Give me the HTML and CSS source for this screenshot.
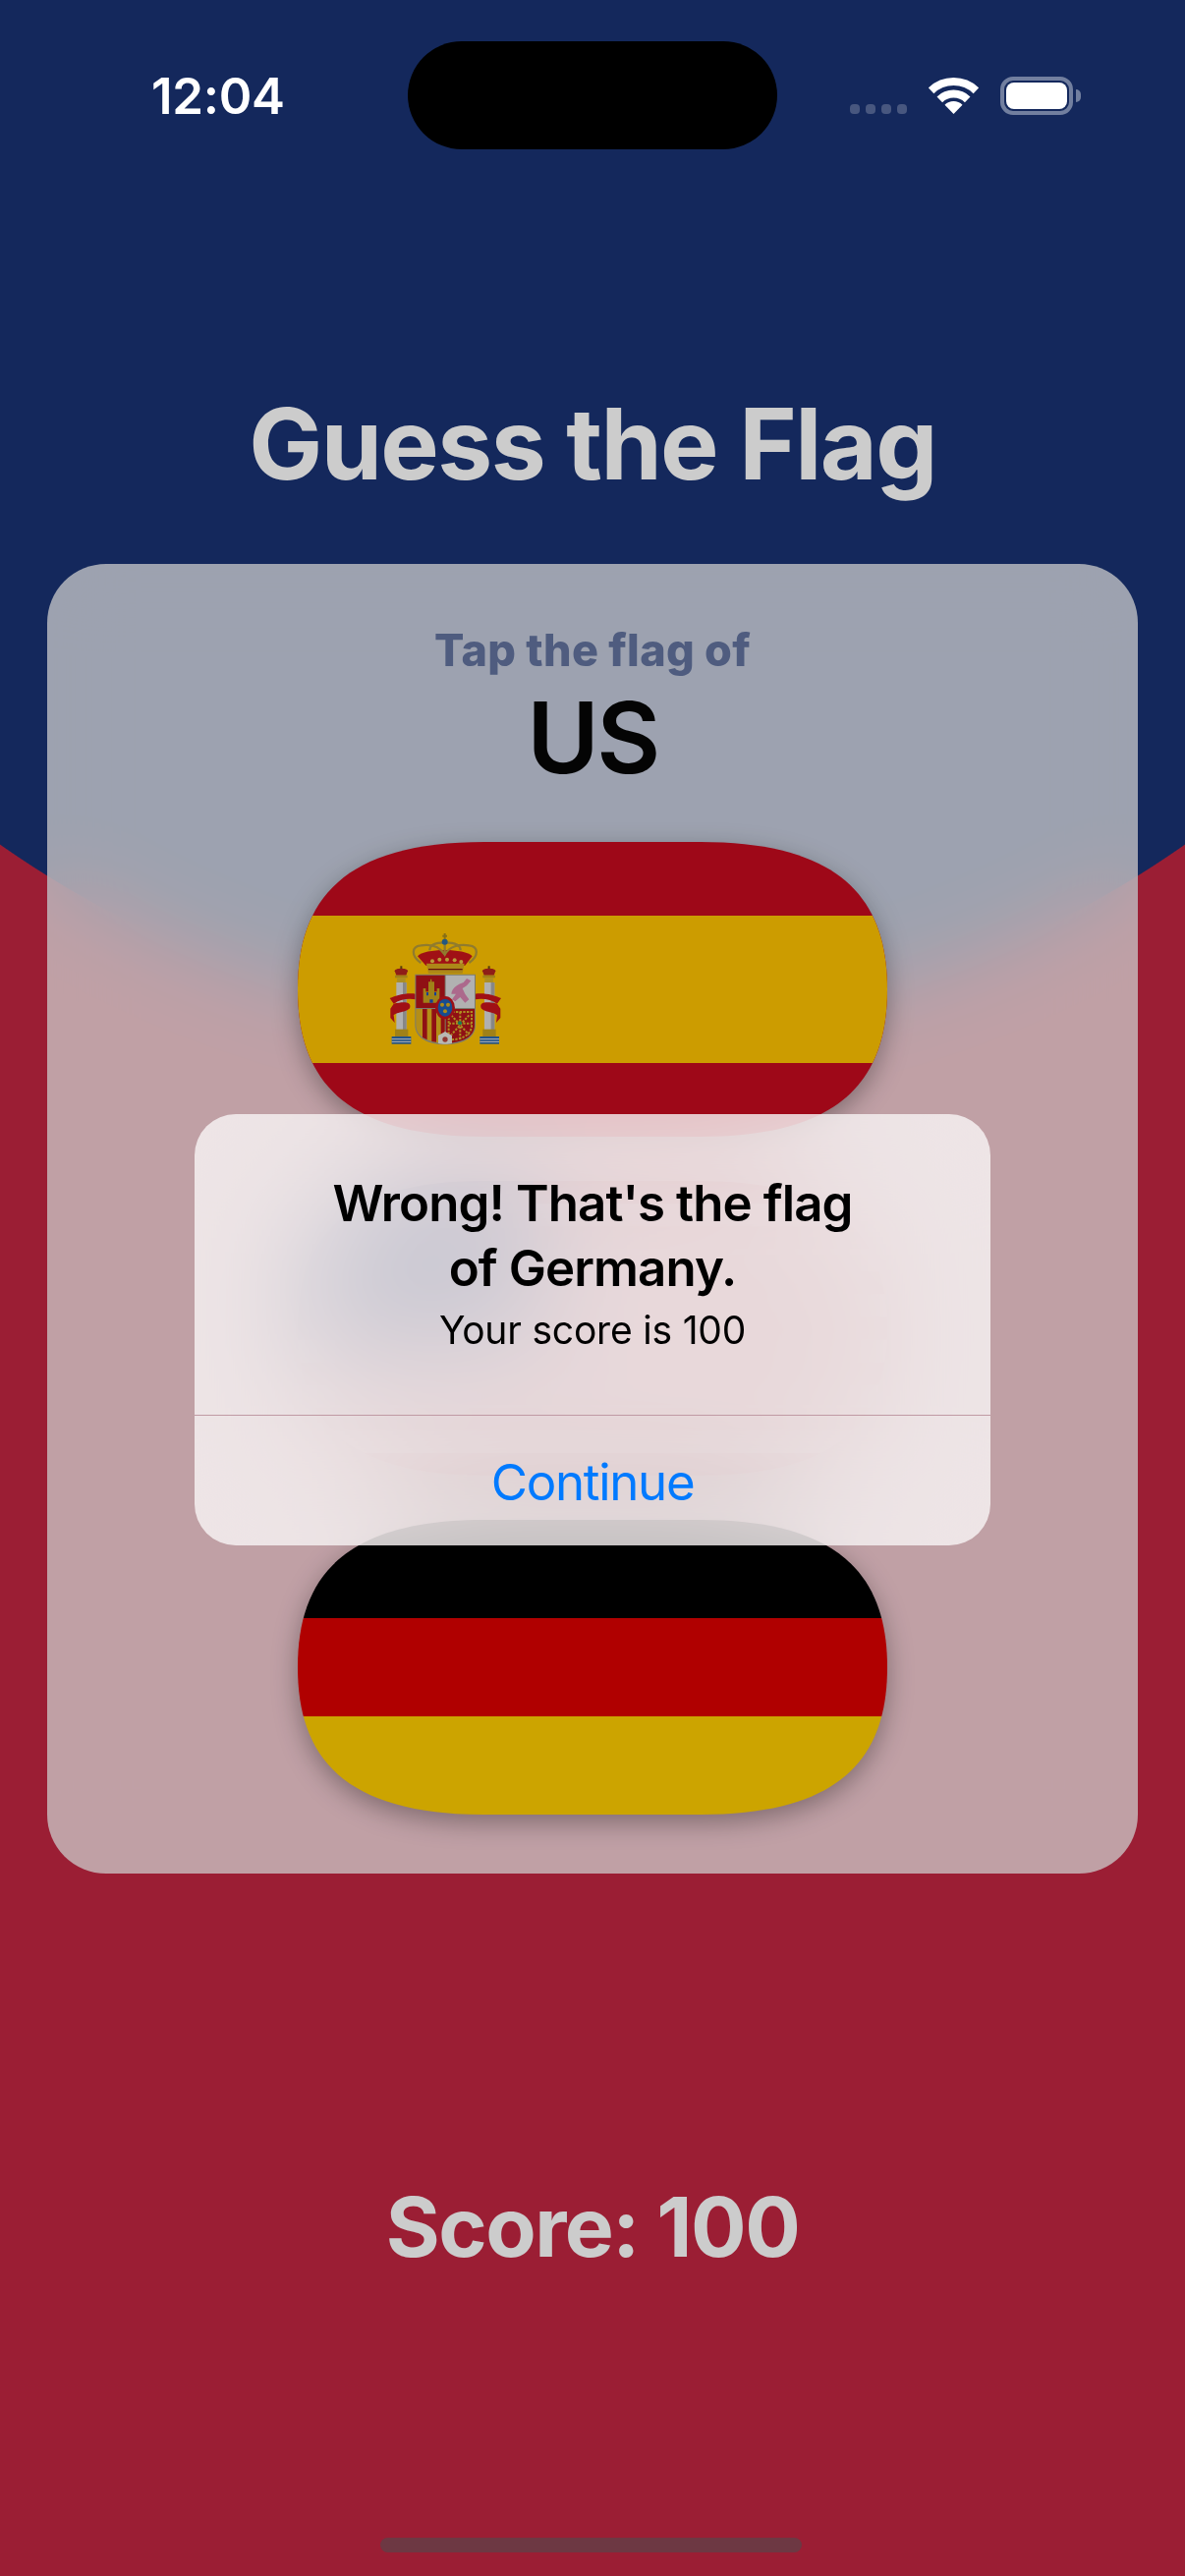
FILE: index.html
```html
<!DOCTYPE html>
<html lang="en">
<head>
<meta charset="utf-8">
<title>Guess the Flag</title>
<link rel="stylesheet" href="styles.css">
</head>
<body>
<svg class="defs" width="0" height="0" aria-hidden="true">
  <defs>
    <clipPath id="pill"><path d="M190 0H410C554 0 600 59 600 150C600 241 554 300 410 300H190C46 300 0 241 0 150C0 59 46 0 190 0Z"/></clipPath>
  </defs>
</svg>
<main class="screen">
  <div class="spacer-status"></div>
  <h1 class="title">Guess the Flag</h1>
  <section class="card">
    <p class="prompt">Tap the flag of</p>
    <p class="country">US</p>
    <div class="flags">
      <svg class="flag" viewBox="0 0 600 300" width="600" height="300">
        <g clip-path="url(#pill)">
          <rect width="600" height="300" fill="#c60b1e"/>
          <rect y="75" width="600" height="150" fill="#ffc400"/>
          <g transform="translate(57 73) scale(.3333)">
            <!-- crown -->
            <path d="M195 130C215 105 340 105 362 130L340 158H220Z" fill="#c8151b"/>
            <path d="M205 150C175 130 175 100 205 97C235 92 262 100 278 125C292 100 322 92 352 97C382 100 382 130 352 150" fill="none" stroke="#b59a3a" stroke-width="7"/>
            <path d="M278 125V92M232 112C232 95 250 88 278 88C306 88 326 95 326 112" fill="none" stroke="#b59a3a" stroke-width="7"/>
            <circle cx="278" cy="86" r="9" fill="#2f6f9f"/>
            <path d="M278 60V78M271 68H285" stroke="#a98a1d" stroke-width="6"/>
            <path d="M222 152H338L332 182H228Z" fill="#d9a91f"/>
            <path d="M228 170H332" stroke="#7d1a12" stroke-width="4"/>
            <g fill="#e8c447"><circle cx="240" cy="145" r="6"/><circle cx="262" cy="140" r="6"/><circle cx="285" cy="140" r="6"/><circle cx="308" cy="142" r="6"/><circle cx="328" cy="147" r="6"/></g>
            <!-- pillars -->
            <g>
              <path d="M125 175C125 165 165 165 165 175L160 188H130Z" fill="#b3261d"/>
              <path d="M142 160H148V168H142Z" fill="#6d4c10"/>
              <rect x="126" y="188" width="38" height="8" fill="#c9a21e"/>
              <rect x="132" y="196" width="26" height="14" fill="#d8b32e"/>
              <rect x="130" y="210" width="31" height="145" fill="#dcdcdc"/>
              <rect x="150" y="210" width="11" height="145" fill="#a9a9a9"/>
              <rect x="126" y="353" width="40" height="22" fill="#c9a21e"/>
              <rect x="116" y="375" width="59" height="23" fill="#2a68ad"/>
              <path d="M116 383H175M116 391H175" stroke="#e5e5e5" stroke-width="3"/>
            </g>
            <g>
              <path d="M393 175C393 165 433 165 433 175L428 188H398Z" fill="#b3261d"/>
              <path d="M410 160H416V168H410Z" fill="#6d4c10"/>
              <rect x="394" y="188" width="38" height="8" fill="#c9a21e"/>
              <rect x="400" y="196" width="26" height="14" fill="#d8b32e"/>
              <rect x="399" y="210" width="31" height="145" fill="#dcdcdc"/>
              <rect x="419" y="210" width="11" height="145" fill="#a9a9a9"/>
              <rect x="394" y="353" width="40" height="22" fill="#c9a21e"/>
              <rect x="385" y="375" width="59" height="23" fill="#2a68ad"/>
              <path d="M385 383H444M385 391H444" stroke="#e5e5e5" stroke-width="3"/>
            </g>
            <!-- ribbons -->
            <path d="M110 258C130 248 165 240 190 245V262C165 258 140 262 122 275Z" fill="#c8151b"/>
            <path d="M122 275C150 268 175 268 172 285C170 300 130 300 122 310L125 333L112 318V290Z" fill="#c8151b"/>
            <path d="M370 245C395 240 430 248 450 258L438 275C420 262 395 258 370 262Z" fill="#c8151b"/>
            <path d="M438 275C410 268 385 268 388 285C390 300 430 300 438 310L435 333L448 318V290Z" fill="#c8151b"/>
            <!-- shield -->
            <path d="M187 185H372V340C372 380 330 400 279 400C228 400 187 380 187 340Z" fill="#9a9a8a"/>
            <path d="M190 188H278V288H190Z" fill="#b3141a"/>
            <path d="M281 188H369V288H281Z" fill="#dedede"/>
            <path d="M190 291H278V396C230 394 190 378 190 340Z" fill="#e2b21e"/>
            <path d="M210 291H224V385L210 378ZM238 291H252V392L238 390ZM266 291H278V396L266 395Z" fill="#b3141a"/>
            <path d="M281 291H369V340C369 378 330 394 281 396Z" fill="#b3141a"/>
            <!-- castle -->
            <path d="M212 272V228H220V238H228V208H234V200H238V208H246V238H254V228H262V272Z" fill="#c9a21e"/>
            <path d="M232 272V262H242V272ZM222 240H228V250H222ZM246 240H252V250H246Z" fill="#1d4fb8"/>
            <!-- lion -->
            <path d="M298 245C300 225 320 215 335 210L345 198L358 205L345 220L332 228L340 245L352 262L340 272L325 255L310 268L300 262L312 245Z" fill="#d884b0"/>
            <!-- Navarre chains -->
            <g fill="none" stroke="#d9b02a" stroke-width="6">
              <path d="M290 300H360V345C355 375 325 385 290 385Z" stroke-dasharray="7 4"/>
              <path d="M325 300V385M290 335H360M298 310L352 370M352 310L298 370" stroke-dasharray="7 4"/>
            </g>
            <circle cx="324" cy="334" r="6" fill="#1f9a6b"/>
            <!-- pomegranate base -->
            <path d="M258 372L279 360L300 372V396C290 399 268 399 258 396Z" fill="#e6e6e0"/>
            <circle cx="279" cy="384" r="8" fill="#b5473f"/>
            <!-- centre -->
            <ellipse cx="279" cy="287" rx="30" ry="35" fill="#c2151c"/>
            <ellipse cx="279" cy="287" rx="22" ry="27" fill="#1d5fb4"/>
            <g fill="#d9ad1f"><circle cx="270" cy="278" r="6"/><circle cx="288" cy="278" r="6"/><circle cx="279" cy="298" r="6"/></g>
          </g>
        </g>
      </svg>
      <svg class="flag" viewBox="0 0 600 300" width="600" height="300">
        <g clip-path="url(#pill)">
          <rect width="600" height="300" fill="#fff"/>
          <path d="M0 11.5H600M0 57.7H600M0 103.8H600M0 150H600M0 196.2H600M0 242.3H600M0 288.5H600" stroke="#b22234" stroke-width="23.1"/>
          <rect width="240" height="161.5" fill="#3c3b6e"/>
        </g>
      </svg>
      <svg class="flag" viewBox="0 0 600 300" width="600" height="300">
        <g clip-path="url(#pill)">
          <rect width="600" height="100" fill="#000"/>
          <rect y="100" width="600" height="100" fill="#d00"/>
          <rect y="200" width="600" height="100" fill="#ffce00"/>
        </g>
      </svg>
    </div>
  </section>
  <p class="score">Score: 100</p>
  <div class="home-indicator"></div>

  <div class="dim"></div>

  <header class="status">
    <span class="time">12:04</span>
    <span class="island"></span>
    <span class="status-icons">
      <span class="dots"><i></i><i></i><i></i><i></i></span>
      <svg class="wifi" viewBox="0 0 51 37" width="51" height="37">
        <path d="M2.6 13.3A33 33 0 0 1 48.4 13.3M11.3 22.3A20.5 20.5 0 0 1 39.7 22.3" fill="none" stroke="#fff" stroke-width="8"/>
        <path d="M25.5 37L16.5 27.65A13 13 0 0 1 34.5 27.65Z" fill="#fff"/>
      </svg>
      <span class="battery"><span class="battery-fill"></span></span>
    </span>
  </header>

  <aside class="alert">
    <div class="alert-body">
      <h2 class="alert-title">Wrong! That's the flag<br>of Germany.</h2>
      <p class="alert-message">Your score is 100</p>
    </div>
    <div class="alert-action">Continue</div>
  </aside>
</main>
</body>
</html>
```
FILE: styles.css
```css
* { box-sizing: border-box; }
html, body { margin: 0; padding: 0; }
body { width: 1206px; height: 2622px; overflow: hidden; font-family: Inter, "Liberation Sans", sans-serif; }
.defs { position: absolute; }
.screen {
  position: relative;
  width: 1206px;
  height: 2622px;
  display: flex;
  flex-direction: column;
  align-items: center;
  overflow: hidden;
  background: radial-gradient(circle 1050px at 603px 0, #193373 0, #193373 1049.5px, #c22642 1050.5px, #c22642 100%);
}
.spacer-status { height: 396px; flex: none; }
.title {
  margin: 0;
  height: 112px;
  line-height: 112px;
  font-size: 100px;
  font-weight: 700;
  letter-spacing: -1.6px;
  color: #fff;
  flex: none;
}
.card {
  margin-top: 66px;
  width: 1110px;
  height: 1333px;
  flex: none;
  padding: 60px 0 60px;
  display: flex;
  flex-direction: column;
  align-items: center;
  border-radius: 60px;
  background: rgba(255, 255, 255, .75);
  backdrop-filter: blur(40px);
}
.prompt {
  margin: 0;
  height: 56px;
  line-height: 56px;
  font-size: 45px;
  font-weight: 800;
  letter-spacing: .3px;
  color: #63749f;
}
.country {
  margin: 0;
  height: 122px;
  line-height: 122px;
  font-size: 100px;
  font-weight: 600;
  letter-spacing: -2.5px;
  color: #050505;
}
.flags {
  margin-top: 45px;
  display: flex;
  flex-direction: column;
  gap: 45px;
}
.flag { display: block; filter: drop-shadow(0 8px 13px rgba(0, 0, 0, .33)); }
.score {
  margin: 304px 0 0;
  height: 112px;
  line-height: 112px;
  font-size: 84px;
  font-weight: 700;
  letter-spacing: -1.5px;
  color: #fff;
  flex: none;
}
.home-indicator {
  position: absolute;
  left: 387px;
  top: 2583px;
  width: 429px;
  height: 15px;
  border-radius: 8px;
  background: #894654;
}
.dim { position: absolute; inset: 0; background: rgba(0, 0, 0, .2); }
.status {
  position: absolute;
  top: 42px;
  left: 0;
  width: 1206px;
  height: 110px;
  padding: 0 106px 0 154px;
  display: flex;
  align-items: center;
}
.time {
  width: 261px;
  padding-top: 2px;
  font-size: 51px;
  font-weight: 600;
  letter-spacing: -.3px;
  line-height: 110px;
  color: #fff;
}
.island { width: 376px; height: 110px; border-radius: 55px; background: #000; flex: none; }
.status-icons {
  margin-left: 74px;
  flex: 1;
  height: 110px;
  position: relative;
  display: flex;
  align-items: flex-start;
}
.dots { display: flex; gap: 6px; margin-top: 64px; }
.dots i { display: block; width: 10px; height: 10px; border-radius: 4px; background: #48577f; }
.wifi { margin: 37px 0 0 22px; flex: none; }
.battery {
  margin: 36px 0 0 22px;
  width: 74px;
  height: 39px;
  border: 4px solid #727f9f;
  border-radius: 13px;
  padding: 2px;
  position: relative;
  flex: none;
}
.battery::after {
  content: "";
  position: absolute;
  left: 73px;
  top: 9px;
  width: 5px;
  height: 13px;
  border-radius: 0 5px 5px 0;
  background: #727f9f;
}
.battery-fill { display: block; width: 100%; height: 100%; background: #fff; border-radius: 8px; }
.alert {
  position: absolute;
  left: 198px;
  top: 1134px;
  width: 810px;
  height: 439px;
  border-radius: 42px;
  background: rgba(255, 255, 255, .72);
  backdrop-filter: blur(60px);
  display: flex;
  flex-direction: column;
  text-align: center;
  overflow: hidden;
}
.alert-body { height: 307px; border-bottom: 1px solid #c09aa4; padding-top: 58px; }
.alert-title {
  margin: 0;
  font-size: 51px;
  line-height: 66px;
  font-weight: 600;
  letter-spacing: -.9px;
  color: #000;
}
.alert-message {
  margin: 0;
  padding-top: 3px;
  font-size: 39px;
  line-height: 54px;
  font-weight: 400;
  letter-spacing: -.2px;
  color: #000;
}
.alert-action {
  flex: 1;
  padding-top: 2px;
  display: flex;
  align-items: center;
  justify-content: center;
  font-size: 51px;
  font-weight: 400;
  letter-spacing: -1.3px;
  color: #007aff;
}
```
